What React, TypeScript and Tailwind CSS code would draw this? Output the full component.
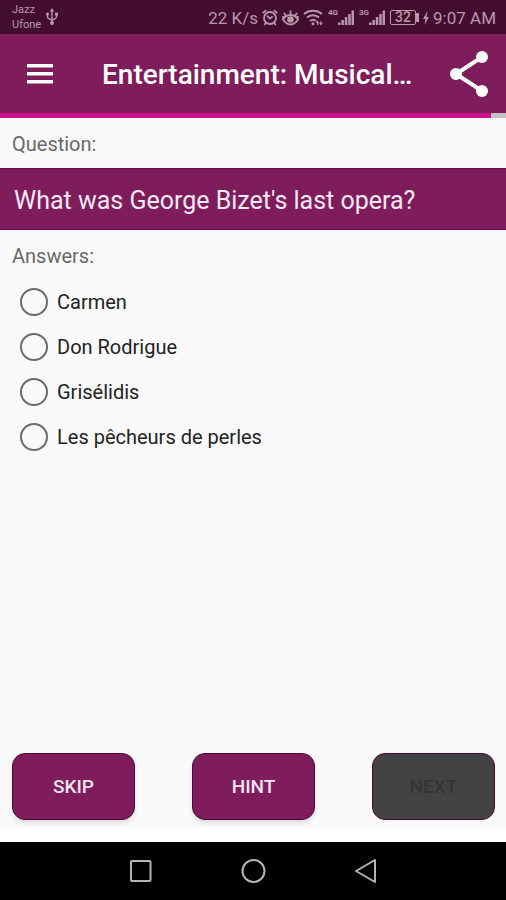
import React, { useState } from 'react';

const answers = ['Carmen', 'Don Rodrigue', 'Grisélidis', 'Les pêcheurs de perles'];

const UsbIcon: React.FC = () => (
  <svg width="14" height="18" viewBox="0 0 14 18" fill="none" stroke="currentColor" strokeWidth="1.4">
    <path d="M7 3v11M2.5 6.5v2.2c0 1.2.8 1.8 2 2.3l2.5 1.2 2.5-1.2c1.2-.5 2-1.1 2-2.3V6.5" />
    <path d="M7 0l2.2 3.6H4.8z" fill="currentColor" stroke="none" />
    <circle cx="2.5" cy="6" r="1.6" fill="currentColor" stroke="none" />
    <path d="M10 4.6h3v3h-3z" fill="currentColor" stroke="none" />
    <circle cx="7" cy="15" r="2" fill="currentColor" stroke="none" />
  </svg>
);

const AlarmIcon: React.FC = () => (
  <svg width="16" height="17" viewBox="0 0 16 17" fill="none" stroke="currentColor" strokeWidth="1.8">
    <circle cx="8" cy="9" r="6" />
    <path d="M.8 4.2 4.2 1.2M15.2 4.2l-3.4-3M3.8 14l-1.6 2M12.2 14l1.6 2M5 6.6l3 3 2.6-2.2" />
  </svg>
);

const EyeIcon: React.FC = () => (
  <svg width="17" height="17" viewBox="0 0 17 17" fill="none" stroke="currentColor" strokeWidth="1.8">
    <path d="M1 10.5C3 7.3 5.5 6 8.5 6s5.5 1.3 7.500 4.500c-2 3-4.500 5-7.500 5S3 13.500 1 10.500zM8.500 6V1.500M4 7 2 4M13 7l2-3M1.200 10.500V7M15.800 10.500V7" />
    <circle cx="8.5" cy="10.5" r="3.3" fill="currentColor" stroke="none" />
  </svg>
);

const WifiIcon: React.FC = () => (
  <svg width="20" height="17" viewBox="0 0 20 17" fill="none" stroke="currentColor" strokeWidth="2">
    <path d="M1 5C6 .8 14 .8 19 5M4 8.600c3.400-3 8.600-3 12 0M7 12c1.800-1.500 4.200-1.500 6 0" />
    <circle cx="10" cy="14.8" r="1.5" fill="currentColor" stroke="none" />
    <path d="M14.5 11.500 12.800 14h1.200v2h1.200v-2h1.200zM18 16.500l1.700-2.500h-1.200v-2h-1.200v2h-1.200z" fill="currentColor" stroke="none" />
  </svg>
);

const Signal: React.FC<{ label: string }> = ({ label }) => (
  <span className="flex items-start">
    <span className="text-[8px] leading-[8px] font-bold">{label}</span>
    <svg width="16" height="17" viewBox="0 0 16 17" fill="currentColor">
      <path d="M0 13.5h2.5V16H0zM3.4 11h2.5v5H3.4zM6.8 8h2.5v8H6.8zM10.200 5h2.5v11h-2.5zM13.500 1.500H16V16h-2.500z" />
    </svg>
  </span>
);

const StatusBar: React.FC = () => (
  <div className="flex h-[34px] shrink-0 items-center justify-between bg-[#430d30] pl-3 pr-[10px] text-[#b997ab]">
    <div className="flex items-center gap-1">
      <div className="text-[11px] leading-[15px]">
        <div>Jazz</div>
        <div>Ufone</div>
      </div>
      <UsbIcon />
    </div>
    <div className="flex items-center gap-1 pt-px">
      <span className="text-[17px] leading-5">22 K/s</span>
      <AlarmIcon />
      <EyeIcon />
      <span className="flex items-center gap-[5px]">
        <WifiIcon />
        <Signal label="4G" />
        <Signal label="3G" />
        <span className="flex items-center">
          <span className="flex h-[15px] w-[26px] items-center justify-center rounded-xs border border-current text-[14px] leading-[13px] font-medium">
            32
          </span>
          <span className="h-[9px] w-[3px] bg-current"></span>
          <svg className="ml-1" width="6" height="14" viewBox="0 0 6 14" fill="currentColor">
            <path d="M4.5 0 0 8h2.5L1.5 14 6 6H3.5z" />
          </svg>
        </span>
      </span>
      <span className="text-[17px] leading-5">9:07 AM</span>
    </div>
  </div>
);

const App: React.FC = () => {
  const [selected, setSelected] = useState('');

  return (
    <div className="flex min-h-screen flex-col bg-[#fafafa] font-[Roboto,sans-serif]">
      <StatusBar />

      <header className="flex h-[79px] shrink-0 items-center bg-[#7f1c5c] pl-[26px] pr-4 text-white">
        <button type="button" aria-label="Menu">
          <svg width="28" height="20" viewBox="0 0 28 20" fill="currentColor">
            <path d="M1 0h26v3.600H1zM1 8h26v3.600H1zM1 16h26v3.600H1z" />
          </svg>
        </button>
        <h1 className="ml-12 min-w-0 flex-1 truncate pt-[2px] text-[28px] leading-8 font-medium">Entertainment: Musical…</h1>
        <button type="button" aria-label="Share">
          <svg width="40" height="46" viewBox="0 0 40 46" fill="currentColor">
            <path d="M32 6 6 23l26 17" fill="none" stroke="currentColor" strokeWidth="4" />
            <circle cx="32" cy="6" r="6" />
            <circle cx="6" cy="23" r="6" />
            <circle cx="32" cy="40" r="6" />
          </svg>
        </button>
      </header>

      <div className="h-[5px] shrink-0 bg-[#c4c0c3]">
        <div className="h-full w-[97%] bg-[#cb118c]"></div>
      </div>

      <main className="flex flex-1 flex-col">
        <p className="px-3 pt-[14px] pb-3 text-[20px] leading-6 text-[#686868]">Question:</p>
        <h2 className="border-y border-[#661049] bg-[#7f1c5c] px-[14px] pt-4 pb-3 text-[25px] leading-8 text-[#fbeaf5]">
          What was George Bizet's last opera?
        </h2>
        <fieldset>
          <legend className="px-3 pt-[14px] pb-[11px] text-[20px] leading-6 text-[#686868]">Answers:</legend>
          {answers.map((answer) => (
            <label key={answer} className="flex h-[45px] items-center gap-[9px] pl-5 text-[20px] leading-6 text-[#222222]">
              <input
                type="radio"
                name="answer"
                value={answer}
                checked={selected === answer}
                onChange={() => setSelected(answer)}
                className="size-7 appearance-none rounded-full border-2 border-[#6b6b6b] checked:border-8 checked:border-[#7f1c5c]"
              />
              {answer}
            </label>
          ))}
        </fieldset>

        <div className="mt-auto flex justify-between pr-[11px] pb-2 pl-3 text-[19px] leading-6 font-medium">
          <button type="button" className="h-[67px] w-[123px] rounded-[13px] border border-[#4b0735] bg-[#7f1c5c] text-[#f6e4ef] shadow-md">
            SKIP
          </button>
          <button type="button" className="h-[67px] w-[123px] rounded-[13px] border border-[#4b0735] bg-[#7f1c5c] text-[#f6e4ef] shadow-md">
            HINT
          </button>
          <button
            type="button"
            disabled={!selected}
            className="h-[67px] w-[123px] rounded-[13px] border border-[#4b0735] bg-[#7f1c5c] text-[#f6e4ef] disabled:bg-[#434343] disabled:text-[#353535]"
          >
            NEXT
          </button>
        </div>
        <div className="h-[14px] bg-white"></div>
      </main>

      <nav className="flex h-[58px] shrink-0 items-center justify-center gap-[88px] bg-black text-[#b4b4b4]">
        <button type="button" aria-label="Recent apps">
          <svg width="24" height="26" viewBox="0 0 24 26" fill="none" stroke="currentColor" strokeWidth="2">
            <rect x="3" y="3" width="19.5" height="20" rx="1" />
          </svg>
        </button>
        <button type="button" aria-label="Home">
          <svg width="26" height="26" viewBox="0 0 26 26" fill="none" stroke="currentColor" strokeWidth="2">
            <circle cx="13.5" cy="13" r="11" />
          </svg>
        </button>
        <button type="button" aria-label="Back">
          <svg width="24" height="26" viewBox="0 0 24 26" fill="none" stroke="currentColor" strokeWidth="2" strokeLinejoin="round">
            <path d="M21 2v22L2 13z" />
          </svg>
        </button>
      </nav>
    </div>
  );
};

export default App;
